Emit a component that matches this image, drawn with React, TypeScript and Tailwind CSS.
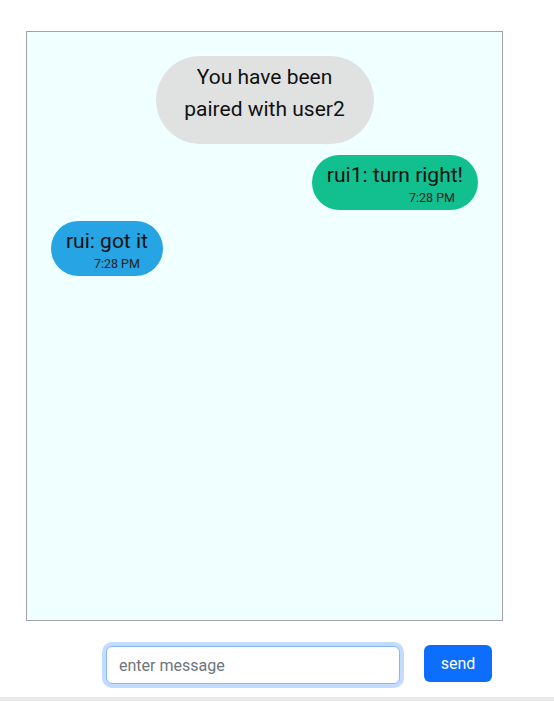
export default function App() {
  const font = { fontFamily: "Roboto, 'Noto Sans', sans-serif" }

  return (
    <div className="min-h-[701px] bg-white flex flex-col" style={font}>
      {/* chat window */}
      <div className="mt-[31px] ml-[26px] w-[477px] h-[590px] border border-[#a3a3a3] bg-[#f0ffff] flex flex-col px-6 pt-6 gap-[11px]">
        <div className="self-center w-[218px] rounded-[44px] bg-[#e0e1e1] pt-[5px] pb-[19px] text-center text-[21px] leading-[32px] text-[#111]">
          You have been
          <br />
          paired with user2
        </div>

        <div className="self-end rounded-full bg-[#12bf8f] px-[15px] pt-[6px] pb-[3px] text-[#111]">
          <p className="text-[21px] leading-[28px]">rui1: turn right!</p>
          <p className="text-right text-[12.5px] leading-[18px] pr-2 text-[#222]">7:28 PM</p>
        </div>

        <div className="self-start rounded-full bg-[#26a4e4] px-[15px] pt-[6px] pb-[3px] text-[#111]">
          <p className="text-[21px] leading-[28px]">rui: got it</p>
          <p className="text-right text-[12.5px] leading-[18px] pr-2 text-[#222]">7:28 PM</p>
        </div>
      </div>

      {/* input row */}
      <div className="mt-[25px] ml-[106px] flex items-start gap-6">
        <input
          placeholder="enter message"
          className="w-[294px] h-[38px] rounded-[6px] border border-[#86b7fe] bg-white px-3 text-[16px] text-[#212529] placeholder:text-[#6c757d] outline-none ring-4 ring-[#c2dbfe]"
        />
        <button className="mt-[-1px] w-[68px] h-[37px] rounded-[6px] bg-[#0d6efd] text-white text-[16px]">
          send
        </button>
      </div>

      <div className="mt-[13px] h-[4px] bg-[#e9e9e9]" />
    </div>
  )
}
